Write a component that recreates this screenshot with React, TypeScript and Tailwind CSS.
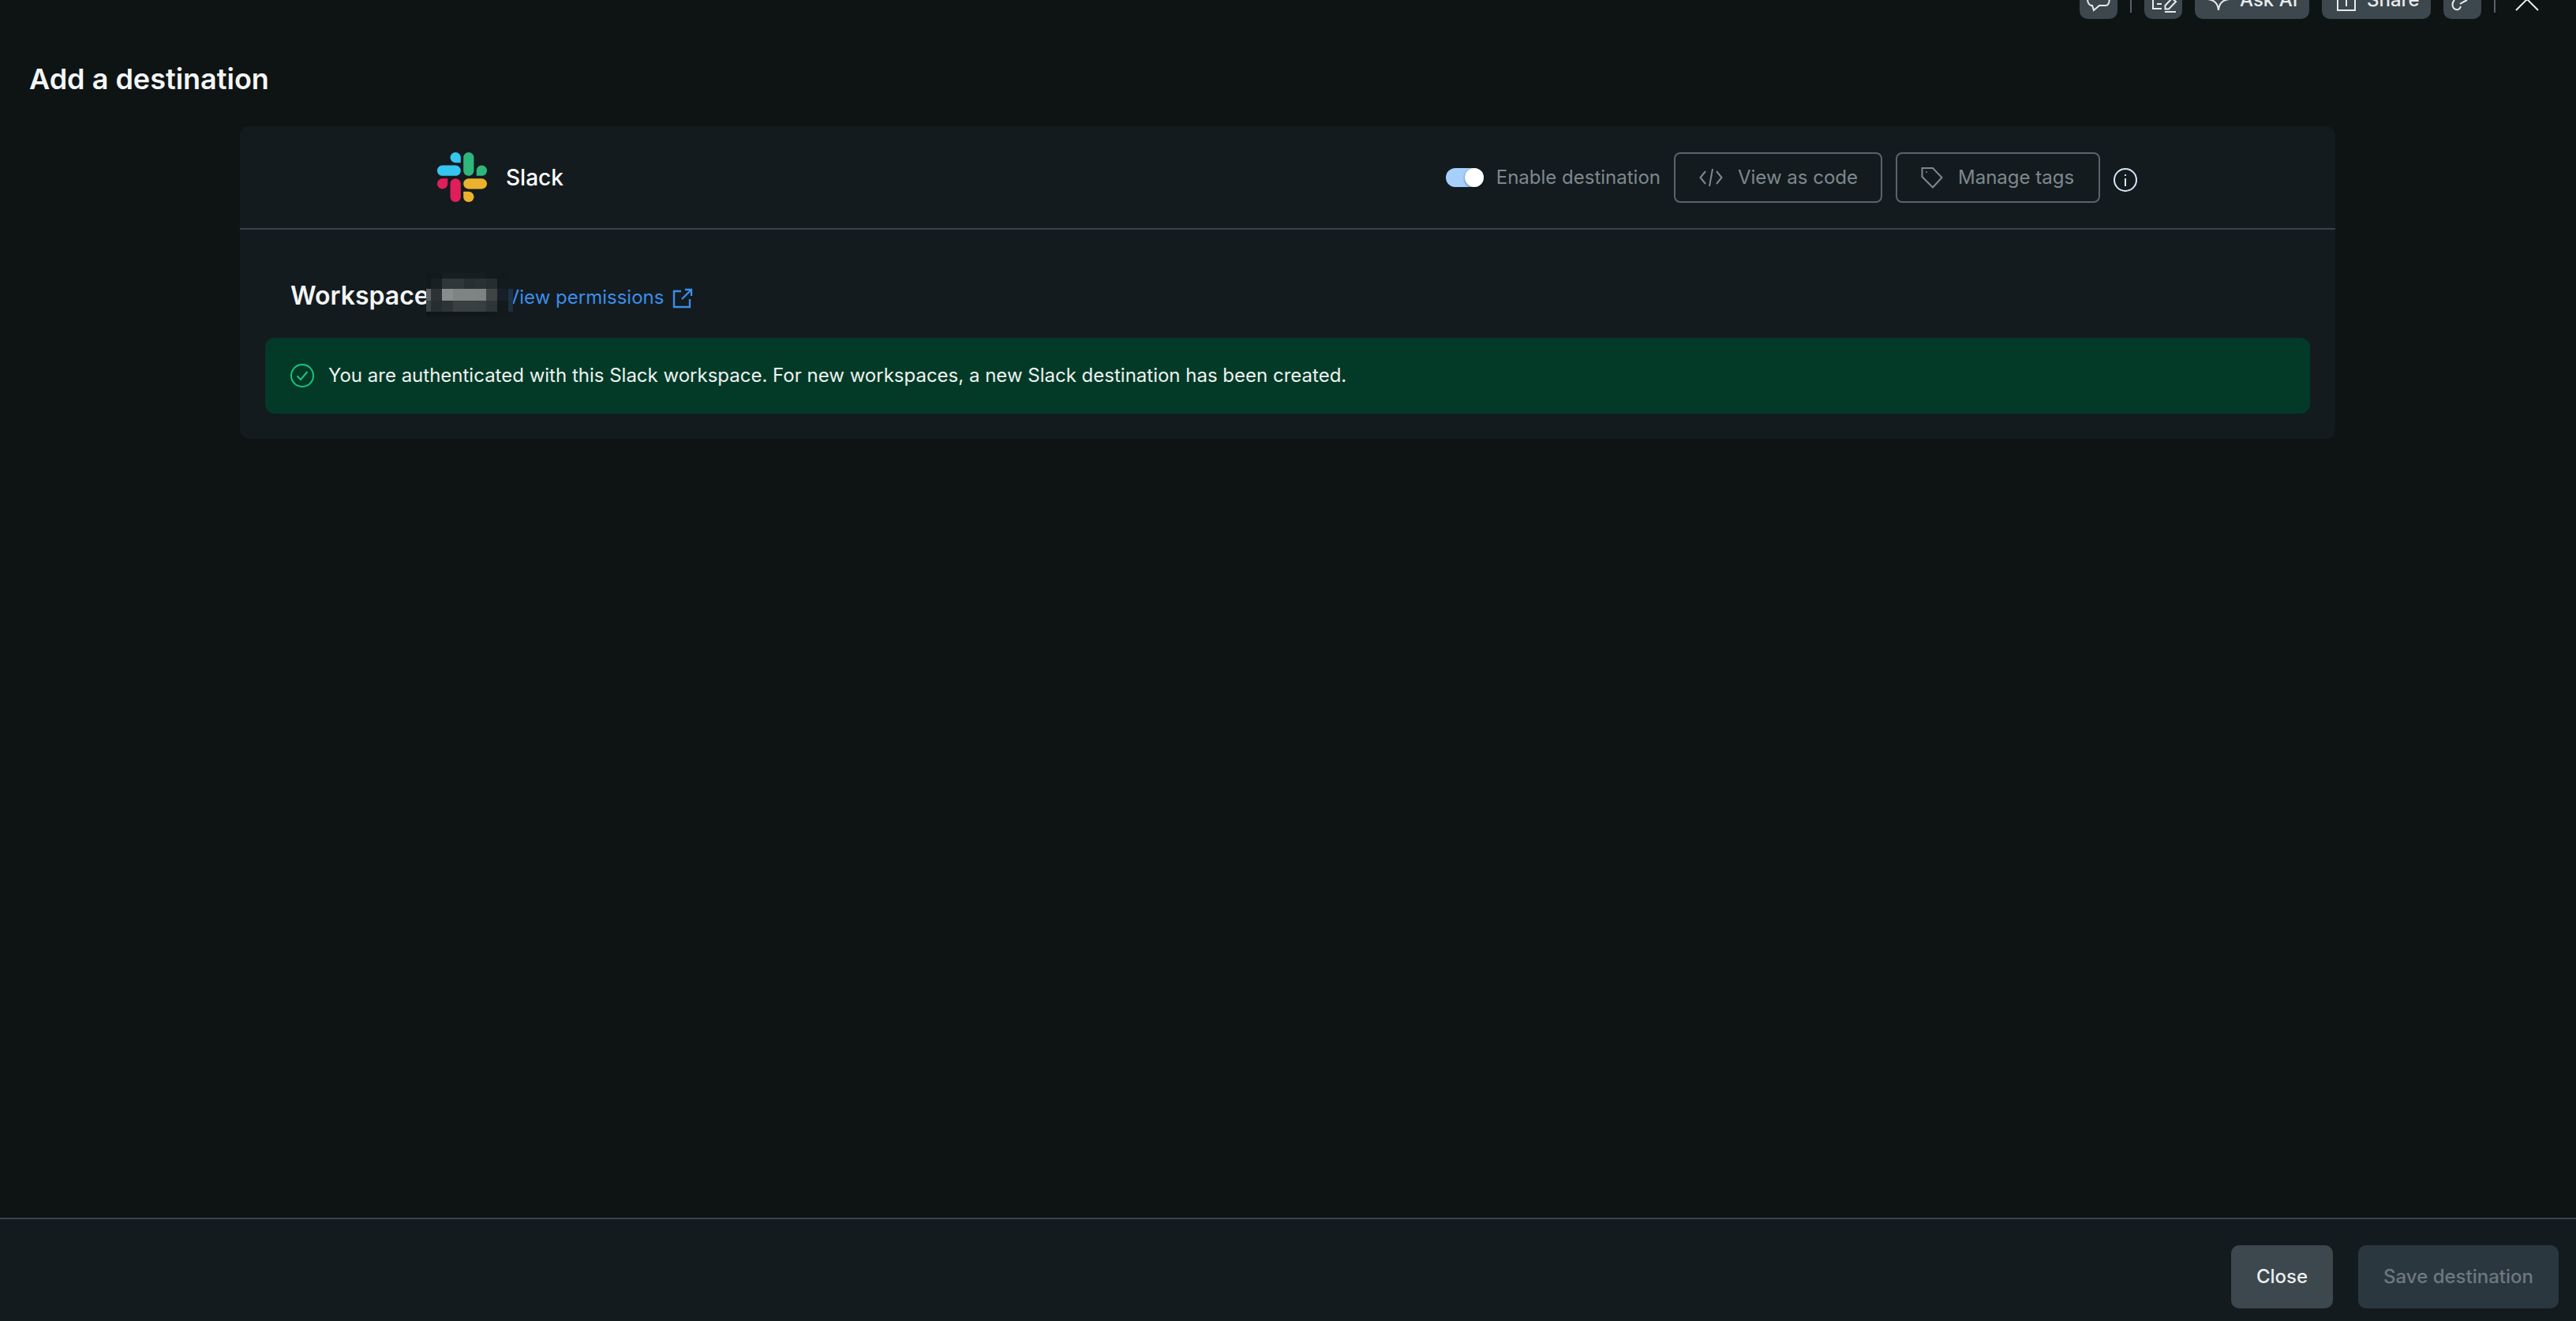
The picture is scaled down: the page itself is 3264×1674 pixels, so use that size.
const rows: { h: number; c: string[] }[] = [
  { h: 7, c: ["#12191c", "#12191c", "#161e21", "#161e21", "#161e21", "#161e21", "#131b1e", "#131a1d", "#131b1f"] },
  { h: 13, c: ["#12191c", "#182022", "#2f3739", "#2f3739", "#282f32", "#2a3133", "#262d30", "#141b1f", "#141b1f"] },
  { h: 15, c: ["#5c6163", "#2c3335", "#878c8c", "#7e8484", "#7f8583", "#7d8381", "#3f4543", "#171f27", "#1b3247"] },
  { h: 14, c: ["#3b4244", "#272e30", "#2d3436", "#3a4042", "#394042", "#373f41", "#2e3537", "#121a1c", "#1c2f3f"] },
  { h: 6, c: ["#0f1618", "#10171a", "#0f1719", "#10181a", "#10181a", "#10181a", "#10181a", "#121a1d", "#131b1f"] },
];
const colX = [0, 6, 20, 34, 48, 62, 76, 90, 104];
const colW = [6, 14, 14, 14, 14, 14, 14, 14, 6];

function Mosaic() {
  let y = 0;
  return (
    <svg width="110" height="55" viewBox="0 0 110 55" shapeRendering="crispEdges" className="absolute left-[172px] top-[-7px]">
      {rows.map((r, i) => {
        const top = y;
        y += r.h;
        return r.c.map((c, j) => <rect key={`${i}-${j}`} x={colX[j]} y={top} width={colW[j]} height={r.h} fill={c} />);
      })}
    </svg>
  );
}

function Slack() {
  return (
    <svg width="63" height="63" viewBox="0 0 122.8 122.8">
      <path d="M25.8 77.6c0 7.1-5.8 12.9-12.9 12.9S0 84.7 0 77.6s5.8-12.9 12.9-12.9h12.9v12.9z" fill="#e01e5a" />
      <path d="M32.3 77.6c0-7.1 5.8-12.9 12.9-12.9s12.9 5.8 12.9 12.9v32.3c0 7.1-5.8 12.9-12.9 12.9s-12.9-5.8-12.9-12.9V77.6z" fill="#e01e5a" />
      <path d="M45.2 25.8c-7.1 0-12.9-5.8-12.9-12.9S38.1 0 45.2 0s12.9 5.8 12.9 12.9v12.9H45.2z" fill="#36c5f0" />
      <path d="M45.2 32.3c7.1 0 12.9 5.8 12.9 12.9s-5.8 12.9-12.9 12.9H12.9C5.8 58.1 0 52.3 0 45.2s5.8-12.9 12.9-12.9h32.3z" fill="#36c5f0" />
      <path d="M97 45.2c0-7.1 5.8-12.9 12.9-12.9s12.9 5.8 12.9 12.9-5.8 12.9-12.9 12.9H97V45.2z" fill="#2eb67d" />
      <path d="M90.5 45.2c0 7.1-5.8 12.9-12.9 12.9s-12.9-5.8-12.9-12.9V12.9C64.7 5.8 70.5 0 77.6 0s12.9 5.8 12.9 12.9v32.3z" fill="#2eb67d" />
      <path d="M77.6 97c7.1 0 12.9 5.8 12.9 12.9s-5.8 12.9-12.9 12.9-12.9-5.8-12.9-12.9V97h12.9z" fill="#ecb22e" />
      <path d="M77.6 90.5c-7.1 0-12.9-5.8-12.9-12.9s5.8-12.9 12.9-12.9h32.3c7.1 0 12.9 5.8 12.9 12.9s-5.8 12.9-12.9 12.9H77.6z" fill="#ecb22e" />
    </svg>
  );
}

function Top({ d, className = "" }: { d: string; className?: string }) {
  return (
    <svg width="32" height="32" viewBox="0 0 32 32" fill="none" stroke="#e8ebec" strokeWidth="2" className={`overflow-visible shrink-0 ${className}`}>
      <path d={d} />
    </svg>
  );
}

const topBtn = "flex h-[48px] items-center justify-center rounded-[10px] bg-[#3c474e]";
const outlineBtn = "flex h-[64px] items-center gap-[19px] rounded-[8px] border-2 border-[#5a646a] pl-[30px] text-[24px] text-[#7f888d]";

export default function App() {
  return (
    <div className="flex h-[1674px] w-[3264px] flex-col overflow-hidden bg-[#0e1414] font-['Inter',sans-serif] text-white">
      <div className="-mt-[24px] flex h-[48px] shrink-0 items-center justify-end gap-[16px] pr-[46px]">
        <div className={`${topBtn} w-[48px]`}>
          <Top d="M2 14C2 19 4 23 8 23L10 29L17 23H25C28 23 30 19 30 12" />
        </div>
        <div className="h-[32px] w-[2px] bg-[#566168]" />
        <div className={`${topBtn} w-[48px]`}>
          <svg width="32" height="32" viewBox="0 0 32 32" fill="none" stroke="#e8ebec" strokeWidth="2" className="overflow-visible">
            <path d="M3 4V27H14M8 21H14M18.5 27.5V23L27 14L32 18L23 27.5ZM18 31H32" />
          </svg>
        </div>
        <div className={`${topBtn} !justify-start w-[145px] gap-[11px] pl-[14px] text-[24px] font-medium text-[#e8ebec]`}>
          <Top d="M2 15Q15 16 16 29Q17 16 30 15" />
          <span>Ask AI</span>
        </div>
        <div className={`${topBtn} !justify-start w-[138px] gap-[10px] pl-[15px] text-[24px] font-medium text-[#e8ebec]`}>
          <Top d="M5 5V29H27V5M16 5V24" />
          <span>Share</span>
        </div>
        <div className={`${topBtn} w-[48px]`}>
          <Top d="M6 16C2 20 3 27 8 28C11 29 13 27 14 24M13 21C16 19 20 17 22 16" />
        </div>
        <div className="h-[32px] w-[2px] bg-[#566168]" />
        <Top className="ml-[8px]" d="M2 1L30 29M30 1L2 29" />
      </div>

      <h1 className="ml-[37px] mt-[54px] h-[44px] text-[36px] font-semibold leading-[44px] text-[#f4f6f6]">Add a destination</h1>

      <div className="flex-1">
        <div className="ml-[304px] mt-[38px] w-[2655px] rounded-[12px] bg-[#131b1f]">
          <div className="flex h-[131px] items-center justify-between border-b-2 border-[#3a444a] pl-[250px] pr-[251px]">
            <div className="flex items-center gap-[24px]">
              <Slack />
              <span className="text-[28px] font-medium text-white">Slack</span>
            </div>
            <div className="flex items-center gap-[17px]">
              <div className="flex items-center gap-[16px]">
                <div className="flex h-[24px] w-[48px] justify-end rounded-full bg-[#a6d0fb]">
                  <div className="size-[24px] rounded-full bg-white shadow-[0_1px_3px_rgba(0,0,0,0.5)]" />
                </div>
                <span className="text-[24px] text-[#7f888d]">Enable destination</span>
              </div>
              <div className={`${outlineBtn} w-[264px]`}>
                <svg width="30" height="24" viewBox="0 0 30 24" fill="none" stroke="#7f888d" strokeWidth="2">
                  <path d="M8 4L1.5 12L8 20M22 4L28.5 12L22 20M17 1L13 23" />
                </svg>
                <span>View as code</span>
              </div>
              <div className={`${outlineBtn} w-[259px]`}>
                <svg width="28" height="28" viewBox="0 0 28 28" fill="none" stroke="#7f888d" strokeWidth="2">
                  <path d="M1.5 2H15L26.5 14L15 26.5L1.5 13Z" />
                  <circle cx="7" cy="7" r="1" fill="#7f888d" stroke="none" />
                </svg>
                <span>Manage tags</span>
              </div>
              <svg width="30" height="30" viewBox="0 0 30 30" fill="none" stroke="#d6e8f8" strokeWidth="2" className="mt-[6px]">
                <circle cx="15" cy="15" r="14" />
                <path d="M15 13V23M15 8V10" />
              </svg>
            </div>
          </div>

          <div className="px-[32px] pb-[32px]">
            <div className="relative ml-[32px] mt-[62px] flex h-[48px] items-center">
              <span className="mb-[4px] text-[32px] font-semibold text-[#f4f6f6]">Workspace</span>
              <span className="ml-[98px] text-[24px] text-[#3b8ee8]">View permissions</span>
              <svg width="26" height="26" viewBox="0 0 26 26" fill="none" stroke="#3b8ee8" strokeWidth="2.4" className="ml-[11px] mt-[2px]">
                <path d="M11 4H2V24H22V14M12 14L24 2M16 2H24V10" />
              </svg>
              <Mosaic />
            </div>
            <div className="mt-[27px] flex h-[96px] items-center gap-[18px] rounded-[12px] bg-[#033a27] pl-[32px]">
              <svg width="30" height="30" viewBox="0 0 30 30" fill="none" stroke="#14c784" strokeWidth="2">
                <circle cx="15" cy="15" r="14" />
                <path d="M8.5 15.5L13 20L21.5 10" />
              </svg>
              <span className="text-[24px] text-[#eef2f1]">
                You are authenticated with this Slack workspace. For new workspaces, a new Slack destination has been created.
              </span>
            </div>
          </div>
        </div>
      </div>

      <div className="flex h-[131px] shrink-0 items-start justify-end gap-[32px] border-t-2 border-[#3a444a] bg-[#131b1f] pr-[22px] pt-[33px]">
        <div className="flex h-[80px] w-[129px] items-center justify-center rounded-[10px] bg-[#3d474e] text-[24px] font-medium text-[#eceeef]">Close</div>
        <div className="flex h-[80px] w-[254px] items-center justify-center rounded-[10px] bg-[#2b373f] text-[24px] font-medium text-[#6e7880]">Save destination</div>
      </div>
    </div>
  );
}
